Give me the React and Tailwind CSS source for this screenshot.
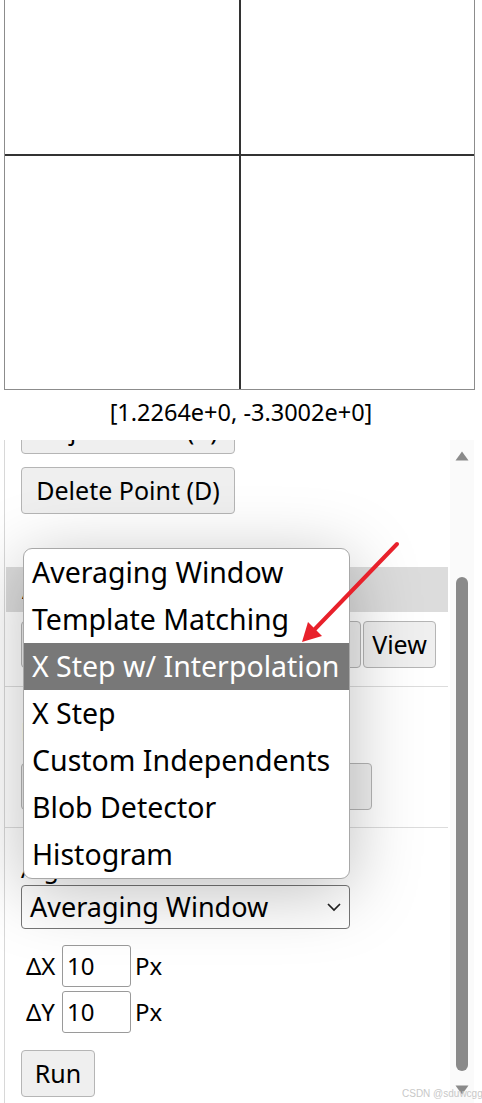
import React from "react";

const F = { fontFamily: '"Noto Sans", "Open Sans", sans-serif' };

function Btn({ children, className = "" }) {
  return (
    <div
      className={
        "h-[47px] flex items-center justify-center bg-[#efefef] border border-[#b5b5b5] rounded-[4px] text-[25px] text-black whitespace-nowrap " +
        className
      }
    >
      {children}
    </div>
  );
}

const items = [
  "Averaging Window",
  "Template Matching",
  "X Step w/ Interpolation",
  "X Step",
  "Custom Independents",
  "Blob Detector",
  "Histogram",
];

export default function App() {
  return (
    <div className="relative w-[482px] h-[1103px] overflow-hidden bg-white text-black" style={F}>
      {/* canvas */}
      <div className="ml-[4px] w-[471px] h-[390px] border-x border-b border-[#8c8c8c]">
        <svg width="469" height="389" className="block">
          <line x1="235" y1="0" x2="235" y2="389" stroke="#333" strokeWidth="2" />
          <line x1="0" y1="155" x2="469" y2="155" stroke="#333" strokeWidth="2" />
        </svg>
      </div>
      <div className="h-[50px] flex items-center justify-center text-[23.5px] leading-none pb-[4px] whitespace-nowrap">
        [1.2264e+0, -3.3002e+0]
      </div>

      {/* panel */}
      <div className="ml-[4px] w-[470px] h-[663px] flex border-l border-[#d8d8d8] overflow-hidden">
        <div className="flex-1 flex flex-col pl-[16px] pr-[2px]">
          <div className="mt-[-33px]">
            <Btn className="w-[214px]">Adjust Point (A)</Btn>
          </div>
          <div className="mt-[13px]">
            <Btn className="w-[214px]">Delete Point (D)</Btn>
          </div>
          <div className="mt-[53px] -ml-[15px] h-[45px] bg-[#dcdcdc] flex items-center pl-[16px] text-[25px]">
            Algorithms
          </div>
          <div className="mt-[9px] flex gap-[2px]">
            <Btn className="w-[340px]">Choose Area</Btn>
            <Btn className="w-[73px]">View</Btn>
          </div>
          <div className="mt-[18px] -ml-[16px] h-px bg-[#dcdcdc]" />
          <div className="mt-[30px] text-[25px] leading-[28px]">Data Points</div>
          <div className="mt-[18px]">
            <Btn className="w-[351px]">Clear Points</Btn>
          </div>
          <div className="mt-[17px] -ml-[16px] h-px bg-[#dcdcdc]" />
          <div className="mt-[26px] text-[25px] leading-[28px]">Algorithm</div>
          <div className="mt-[3px] w-[329px] h-[44px] border border-[#767676] rounded-[4px] flex items-center justify-between pl-[8px] pr-[7px] text-[27px] whitespace-nowrap">
            <span>Averaging Window</span>
            <svg width="16" height="10" viewBox="0 0 16 10">
              <path d="M2 2 L8 8 L14 2" fill="none" stroke="#222" strokeWidth="1.7" />
            </svg>
          </div>
          <div className="mt-[16px] flex items-center text-[24px] h-[42px]">
            <span className="w-[41px] pl-[5px]">ΔX</span>
            <div className="w-[69px] h-[42px] border border-[#9a9a9a] rounded-[3px] flex items-center pl-[4px]">10</div>
            <span className="ml-[4px]">Px</span>
          </div>
          <div className="mt-[4px] flex items-center text-[24px] h-[42px]">
            <span className="w-[41px] pl-[5px]">ΔY</span>
            <div className="w-[69px] h-[42px] border border-[#9a9a9a] rounded-[3px] flex items-center pl-[4px]">10</div>
            <span className="ml-[4px]">Px</span>
          </div>
          <div className="mt-[17px]">
            <Btn className="w-[74px]">Run</Btn>
          </div>
        </div>
        {/* scrollbar */}
        <div className="w-[24px] h-full bg-[#fafafa] flex flex-col items-center">
          <svg width="14" height="10" className="mt-[11px]" viewBox="0 0 14 10">
            <path d="M7 0.5 L13.5 9.5 L0.5 9.5 Z" fill="#8a8a8a" />
          </svg>
          <div className="mt-[116px] w-[12px] h-[494px] rounded-full bg-[#8a8a8a]" />
          <svg width="14" height="10" className="mt-[14px]" viewBox="0 0 14 10">
            <path d="M0.5 0.5 L13.5 0.5 L7 9.5 Z" fill="#8a8a8a" />
          </svg>
        </div>
      </div>

      {/* dropdown overlay */}
      <div className="absolute left-[23px] top-[548px] w-[327px] bg-white border border-[#a8a8a8] rounded-[9px] overflow-hidden shadow-[0_12px_70px_rgba(0,0,0,0.26)]">
        {items.map((t, i) => (
          <div
            key={t}
            className={
              "h-[47px] flex items-center pl-[8px] text-[28.5px] whitespace-nowrap " +
              (i === 2 ? "bg-[#787878] text-white" : "text-black")
            }
          >
            {t}
          </div>
        ))}
      </div>

      {/* red arrow */}
      <svg className="absolute left-0 top-0 pointer-events-none" width="482" height="1103">
        <line x1="397" y1="544" x2="314" y2="630" stroke="#e8212b" strokeWidth="4" strokeLinecap="round" />
        <path d="M302 642 L308 622 L322 636 Z" fill="#e8212b" />
      </svg>

      {/* watermark */}
      <div className="absolute left-[402px] top-[1086px] text-[10px] text-[#c8c8c8] whitespace-nowrap" style={{ fontFamily: '"Liberation Sans", sans-serif' }}>
        CSDN @sduwcgg
      </div>
    </div>
  );
}
